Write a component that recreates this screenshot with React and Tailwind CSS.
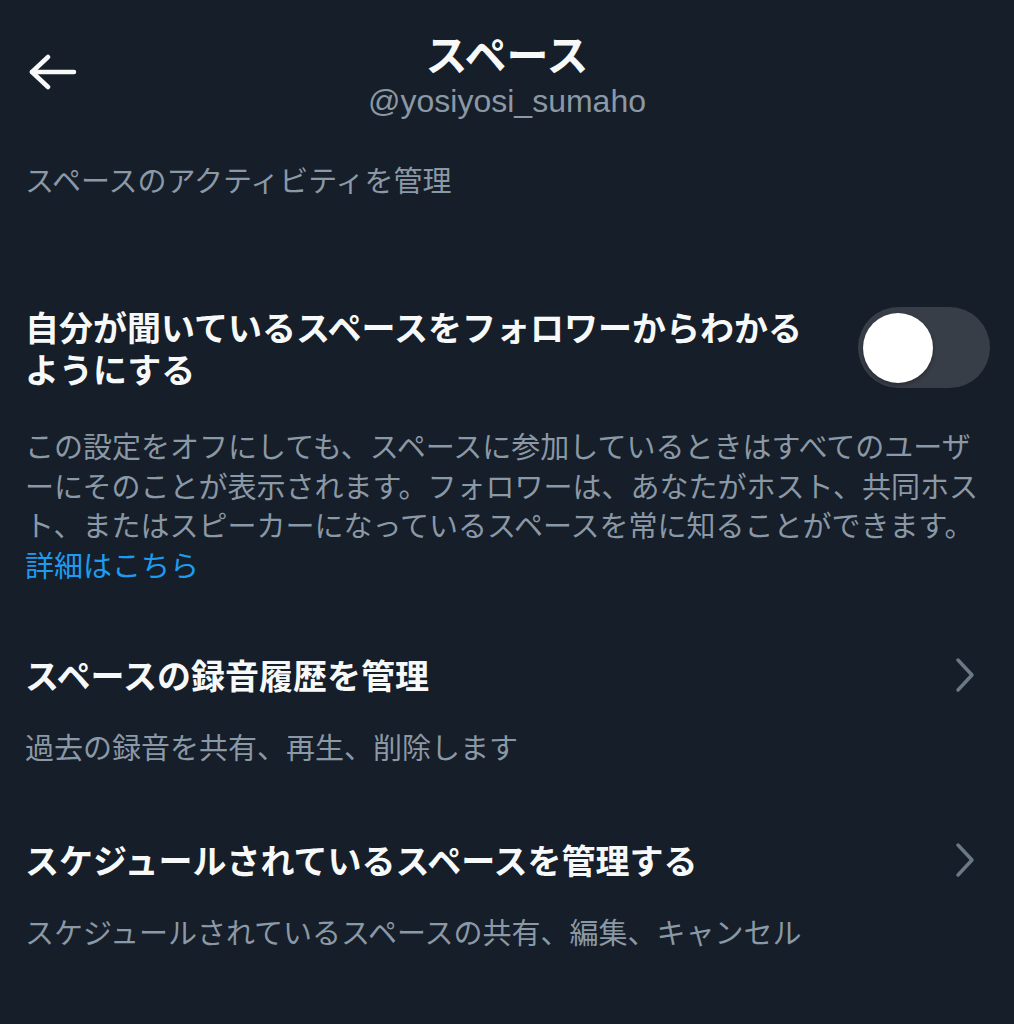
import React from 'react';

function BackArrow() {
    return (
        <svg width="48" height="36" viewBox="0 0 48 36" fill="none" stroke="#f7f9f9" strokeWidth="4.5" strokeLinecap="round" strokeLinejoin="round">
            <path d="M3 18 H45" />
            <path d="M19 3 L3 18 L19 33" />
        </svg>
    );
}

function Chevron() {
    return (
        <svg width="22" height="36" viewBox="0 0 22 36" fill="none" stroke="#6b7886" strokeWidth="3.5" strokeLinecap="round" strokeLinejoin="round">
            <path d="M4 3 L18 18 L4 33" />
        </svg>
    );
}

function Toggle() {
    return (
        <div className="w-[132px] h-[81px] rounded-full bg-[#383e47] flex items-center pl-[5px] shrink-0">
            <div className="w-[70px] h-[70px] rounded-full bg-white shadow-[0_2px_4px_rgba(0,0,0,0.3)]" />
        </div>
    );
}

function LinkRow({ title, sub, className }) {
    return (
        <div className={className}>
            <div className="flex items-center justify-between">
                <p className="text-[34px] leading-[42px] font-bold text-[#f7f9f9] whitespace-nowrap">{title}</p>
                <div className="pr-[13px]">
                    <Chevron />
                </div>
            </div>
            <p className="mt-[30px] text-[29px] leading-[40px] text-[#8b98a5] whitespace-nowrap">{sub}</p>
        </div>
    );
}

export default function App() {
    return (
        <div
            className="min-h-screen w-full bg-[#151e29] text-[#f7f9f9]"
            style={{ fontFamily: '"Noto Sans CJK JP", "Noto Sans", "Liberation Sans", sans-serif' }}
        >
            {/* ヘッダー */}
            <header className="grid grid-cols-[1fr_auto_1fr] items-start pt-[28px] h-[120px]">
                <div className="pl-[29px] pt-[26px]">
                    <BackArrow />
                </div>
                <div className="flex flex-col items-center">
                    <h1 className="text-[42px] leading-[50px] font-bold">スペース</h1>
                    <p className="mt-[4px] text-[32px] leading-[38px] text-[#8b98a5]" style={{ fontFamily: '"Liberation Sans", "Noto Sans", sans-serif' }}>
                        @yosiyosi_sumaho
                    </p>
                </div>
                <div />
            </header>

            <main className="px-[25px]">
                <p className="mt-[39px] text-[29px] leading-[40px] text-[#8b98a5]">スペースのアクティビティを管理</p>

                {/* トグル設定 */}
                <div className="mt-[107px] flex items-start justify-between">
                    <div className="text-[34px] leading-[42px] font-bold whitespace-nowrap">
                        <p>自分が聞いているスペースをフォロワーからわかる</p>
                        <p>ようにする</p>
                    </div>
                    <div className="pt-[1px] mr-[-1px]">
                        <Toggle />
                    </div>
                </div>

                <p className="mt-[36px] text-[29px] leading-[39.5px] text-[#8b98a5] whitespace-nowrap">
                    この設定をオフにしても、スペースに参加しているときはすべてのユーザ
                    <br />
                    ーにそのことが表示されます。フォロワーは、あなたがホスト、共同ホス
                    <br />
                    ト、またはスピーカーになっているスペースを常に知ることができます。
                    <br />
                    <span className="text-[#1d9bf0]">詳細はこちら</span>
                </p>

                <LinkRow className="mt-[70px]" title="スペースの録音履歴を管理" sub="過去の録音を共有、再生、削除します" />
                <LinkRow className="mt-[73px]" title="スケジュールされているスペースを管理する" sub="スケジュールされているスペースの共有、編集、キャンセル" />
            </main>
        </div>
    );
}
